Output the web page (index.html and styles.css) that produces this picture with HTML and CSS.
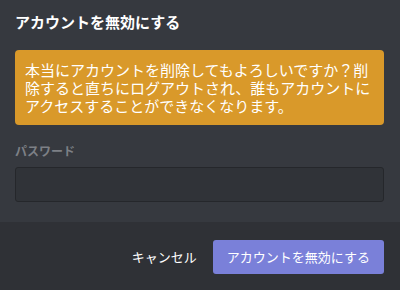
FILE: index.html
```html
<!DOCTYPE html>
<html lang="ja">
<head>
<meta charset="utf-8">
<link rel="stylesheet" href="styles.css">
</head>
<body>
<div class="modal">
  <div class="body">
    <h2 class="title">アカウントを無効にする</h2>
    <div class="warning">本当にアカウントを削除してもよろしいですか？削除すると直ちにログアウトされ、誰もアカウントにアクセスすることができなくなります。</div>
    <div class="label">パスワード</div>
    <div class="input"></div>
  </div>
  <div class="footer">
    <span class="cancel">キャンセル</span>
    <span class="primary">アカウントを無効にする</span>
  </div>
</div>
</body>
</html>
```
FILE: styles.css
```css
html, body {
  margin: 0;
  padding: 0;
  background: #36393f;
}
body {
  font-family: "Noto Sans CJK JP", "Noto Sans", sans-serif;
  color: #fff;
}
.modal {
  width: 400px;
  height: 290px;
  display: flex;
  flex-direction: column;
}
.body {
  padding: 12px 16px 20px 15px;
}
.title {
  margin: 0;
  font-size: 15px;
  line-height: 20px;
  font-weight: 700;
  color: #fff;
}
.warning {
  margin-top: 18px;
  background: #d9992a;
  border-radius: 4px;
  padding: 11px 10px 10px 10px;
  font-size: 15px;
  line-height: 18px;
  color: #fff;
}
.label {
  margin-top: 18px;
  font-size: 12px;
  line-height: 16px;
  font-weight: 700;
  color: #7d8086;
}
.input {
  margin-top: 8px;
  height: 33px;
  background: #303338;
  border: 1px solid #25272b;
  border-radius: 3px;
}
.footer {
  flex: 1;
  background: #2f3136;
  display: flex;
  justify-content: flex-end;
  align-items: flex-start;
  padding: 18px 16px 0 0;
  gap: 16px;
}
.cancel {
  font-size: 13px;
  line-height: 34px;
  color: #fff;
}
.primary {
  background: #7a80d9;
  border-radius: 3px;
  font-size: 13px;
  line-height: 34px;
  padding: 0 14px;
  color: #fff;
}
```
